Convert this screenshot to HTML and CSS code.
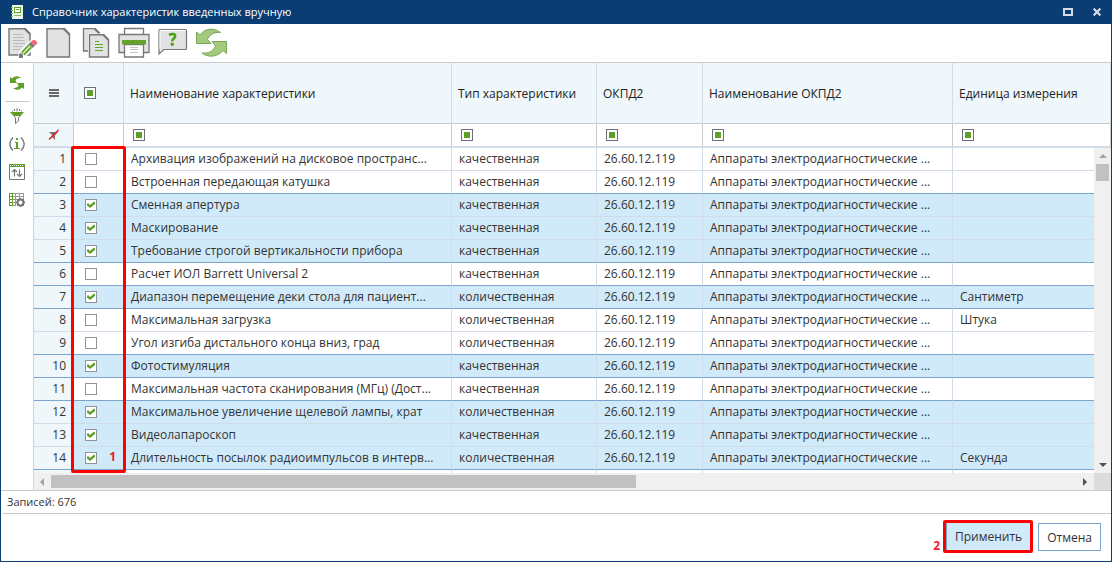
FILE: index.html
```html
<!DOCTYPE html>
<html lang="ru">
<head>
<meta charset="utf-8">
<title>Справочник характеристик введенных вручную</title>
<link rel="stylesheet" href="styles.css">
</head>
<body>
<main class="window">
  <header class="titlebar">
    <svg class="title-icon" width="12" height="14" viewBox="0 0 12 14"><path fill="#edf4e8" d="M1 0h11v14H1z"/><path fill="#5f9f28" d="M3 2h7v6H3z"/><path fill="#fff" d="M4 3h5v4H4z"/><path fill="#5f9f28" d="M5 4h3v1H5z"/><path fill="#8bb764" d="M3 10h7v1H3zM0 2h2v1H0zM0 5h2v1H0zM0 8h2v1H0zM0 11h2v1H0z"/></svg>
    <h1 class="title">Справочник характеристик введенных вручную</h1>
    <button class="win-btn" aria-label="Развернуть"><svg width="10" height="8" viewBox="0 0 10 8"><path fill="none" stroke="#d5dde6" stroke-width="2" d="M1 1h8v6H1z"/></svg></button>
    <button class="win-btn" aria-label="Закрыть"><svg width="8" height="8" viewBox="0 0 8 8"><path stroke="#d5dde6" stroke-width="2.2" d="M.6.6l6.8 6.8M7.4.6L.6 7.4"/></svg></button>
  </header>

  <nav class="toolbar" aria-label="Панель инструментов">
    <button class="tool" aria-label="Изменить"><svg width="30" height="32" viewBox="0 0 30 32"><path fill="#e2e2e2" stroke="#75777a" stroke-width="1.4" d="M1 1.7h16l5 5V28H1z"/><path fill="#fff" d="M17.700 0H24v6.500z"/><path stroke="#75777a" stroke-width="2" d="M16.500 1.500l5.500 5.500"/><path stroke="#b9bbbd" d="M5 7.500h10M5 10.500h11M5 13.500h12M5 16.500h12M5 19.500h9M5 22.500h7"/><path fill="#fff" stroke="#fff" stroke-width="2" d="M11 30l1-5L24 13l5 4-12 12z"/><path fill="#f16a7b" d="M22.500 15l2.500-2h2l2 2v2l-2.500 2z"/><path fill="#777" d="M20.500 17l2-2 4 4-2 2z"/><path fill="#65a52c" d="M13 25l7.500-8 3.500 4-7.500 7.500z"/><path stroke="#e2f0d7" stroke-width="1.300" d="M15 26.500l7-7.500"/><path fill="#777" d="M11 31v-4l2-1 2 2v2l-1 1z"/></svg></button>
    <button class="tool" aria-label="Создать"><svg width="28" height="32" viewBox="0 0 28 32"><path fill="#e2e2e2" stroke="#75777a" stroke-width="1.4" d="M1 1.700h17.500l5 5V30H1z"/><path fill="#fff" d="M18.500 0H25v7z"/><path stroke="#75777a" stroke-width="2" d="M17.500 1.500l6 6"/></svg></button>
    <button class="tool" aria-label="Копировать"><svg width="28" height="32" viewBox="0 0 28 32"><path fill="#e2e2e2" stroke="#75777a" stroke-width="1.300" d="M1.500 1.700h11.500l4.500 4.500V24h-16z"/><path fill="#fff" d="M13.500 0H19v6z"/><path stroke="#75777a" stroke-width="2" d="M12.500 1.500l5 5"/><path fill="#e2e2e2" stroke="#fff" stroke-width="3" d="M7.500 8h14l5 5v17h-19z"/><path fill="#e2e2e2" stroke="#75777a" stroke-width="1.400" d="M7.500 7.700h14l5 5V30h-19z"/><path fill="#fff" d="M22 6h6v6z"/><path stroke="#75777a" stroke-width="2" d="M21 7.500l5.500 5.500"/><path stroke="#63a32a" d="M13 14.500h4M13 17.500h8M13 20.500h8M13 23.500h8"/></svg></button>
    <button class="tool" aria-label="Печать"><svg width="32" height="32" viewBox="0 0 32 32"><path fill="#fff" stroke="#75777a" stroke-width="1.300" d="M6.500 9V1.500h19V8"/><path fill="#e2e2e2" stroke="#75777a" stroke-width="1.300" d="M1 7.500h30v18H1z"/><path fill="#fff" stroke="#75777a" stroke-width="1.300" d="M6.500 17.500h19V30h-19z"/><path fill="#63a32a" d="M4 13h24v4.500H4z"/><path stroke="#c4c4c4" d="M12 20.500h8M12 22.500h8M12 25.500h8"/></svg></button>
    <button class="tool" aria-label="Справка"><svg width="30" height="32" viewBox="0 0 30 32"><path fill="#e2e2e2" stroke="#75777a" stroke-width="1.200" d="M2.500 2.500h25q1 0 1 1v18q0 1-1 1H6L1 27V3.500q0-1 1.500-1z"/><path fill="none" stroke="#fff" d="M2 22V3.500h25.500"/><path fill="none" stroke="#49a30e" stroke-width="2.600" d="M11 8q6-2.500 6.200 1.200c0 2.500-3 2.200-3 5"/><path fill="#49a30e" d="M12.700 15.700h3v3h-3z"/></svg></button>
    <button class="tool" aria-label="Обновить"><svg width="32" height="32" viewBox="0 0 32 32"><path fill="#a5c97c" stroke="#7aa658" d="M.5 5L4 8C9 1 18 .500 24.500 5.500 18 5 14 7 11.500 12.500l3.500 4H.5z"/><path fill="#a5c97c" stroke="#7aa658" d="M30.500 26.500L27 23.500C22 30 12 31 6 26 12.500 26.500 17 24.500 19.500 19L16 14.500h14.500z"/></svg></button>
  </nav>

  <div class="workspace">
    <nav class="sidebar" aria-label="Действия со списком">
      <button class="side-btn side-first" aria-label="Обновить список"><svg width="16" height="16" viewBox="0 0 16 16"><path fill="#5f9f28" d="M1 2l2 1.500C6 .5 9 .5 12 3 9 3 7.500 3.500 6.500 5.500L8 8H1zM15 14l-2-1.500c-3 3-6 3-9 .5 3 0 4.500-.5 5.500-2.500L8 8h7z"/></svg></button>
      <button class="side-btn" aria-label="Фильтр"><svg width="16" height="16" viewBox="0 0 16 16"><path fill="#5f9f28" d="M1 4h14l-3.500 4h-7z"/><path fill="none" stroke="#777" d="M5 8l1.500 2v5.500L9.500 13v-3L11 8M3.500 3.500v-1M5.500 3V1M8 3.500V0M10.500 3V1M12.500 3.500v-1"/></svg></button>
      <button class="side-btn" aria-label="Информация"><svg width="16" height="16" viewBox="0 0 16 16"><path fill="none" stroke="#777" stroke-width="1.400" d="M4 1.500q-6.500 6.500 0 13M12 1.500q6.500 6.500 0 13"/><path fill="#5f9f28" d="M7 2h2v2H7zM6 6h3v6h2v1H5v-1h2V7H6z"/></svg></button>
      <button class="side-btn" aria-label="Сортировка"><svg width="16" height="16" viewBox="0 0 16 16"><path fill="#fff" stroke="#777" d="M.5.500h15v15H.5z"/><path fill="#5f9f28" d="M0 0h16v3H0z"/><path stroke="#fff" stroke-dasharray="1 1" d="M1 1.500h14"/><path stroke="#777" fill="none" stroke-width="1.200" d="M5.500 12.500v-7M3 8l2.500-2.500L8 8M10.500 5.500v7M8 10l2.500 2.500L13 10"/></svg></button>
      <button class="side-btn" aria-label="Настройка колонок"><svg width="16" height="16" viewBox="0 0 16 16"><path stroke="#999" fill="none" d="M3 1.500h12M3 4.500h12M3 7.500h12M3 10.500h4M3 13.500h4M14.500 1v6M6.500 1v12M10.500 1v6"/><path stroke="#5f9f28" fill="none" d="M.5 1v13M3.500 1v13M0 1.500h4M0 4.500h4M0 7.500h4M0 10.500h4M0 13.500h4"/><circle cx="11.500" cy="10.500" r="3" fill="#fff" stroke="#75777a" stroke-width="2"/><path stroke="#75777a" stroke-width="1.500" d="M11.500 6v2M11.500 13v2M7 10.500h2M14 10.500h2M8.300 7.300l1.300 1.300M13.400 12.400l1.300 1.300M8.300 13.700l1.300-1.300M13.400 8.600l1.300-1.300"/></svg></button>
    </nav>

    <section class="grid" aria-label="Характеристики">
      <table class="table table-head">
        <colgroup><col class="c-num"><col class="c-check"><col class="c-name"><col class="c-type"><col class="c-code"><col class="c-okpd"><col></colgroup>
        <thead>
          <tr class="head-row">
            <th class="center"><button class="icon-btn" aria-label="Меню"><svg width="10" height="8" viewBox="0 0 10 8"><path fill="#66686b" d="M0 0h10v2H0zM0 3h10v2H0zM0 6h10v2H0z"/></svg></button></th>
            <th class="select-all"><input class="mark" type="checkbox" aria-label="Выбрать все"></th>
            <th>Наименование характеристики</th><th>Тип характеристики</th><th>ОКПД2</th><th>Наименование ОКПД2</th><th>Единица измерения</th>
          </tr>
          <tr class="filter-row">
            <td class="center num"><button class="icon-btn" aria-label="Сбросить фильтр"><svg width="12" height="12" viewBox="0 0 12 12"><path fill="#75777a" d="M1 3h9L7 6.500V11L4 8V6z"/><path stroke="#f01818" stroke-width="1.400" d="M1 10.500L10.500 1"/></svg></button></td>
            <td></td>
            <td><button class="mark" aria-label="Фильтр: наименование"></button></td>
            <td><button class="mark" aria-label="Фильтр: тип"></button></td>
            <td><button class="mark" aria-label="Фильтр: ОКПД2"></button></td>
            <td><button class="mark" aria-label="Фильтр: наименование ОКПД2"></button></td>
            <td><button class="mark" aria-label="Фильтр: единица измерения"></button></td>
          </tr>
        </thead>
      </table>

      <div class="body-area">
        <div class="viewport">
          <table class="table table-body">
            <colgroup><col class="c-num"><col class="c-check"><col class="c-name"><col class="c-type"><col class="c-code"><col class="c-okpd"><col></colgroup>
            <tbody>
              <tr><td class="num">1</td><td class="pick"><input class="check" type="checkbox" aria-label="Строка 1"></td><td>Архивация изображений на дисковое пространс...</td><td>качественная</td><td>26.60.12.119</td><td>Аппараты электродиагностические ...</td><td></td></tr>
              <tr class="edge"><td class="num">2</td><td class="pick"><input class="check" type="checkbox" aria-label="Строка 2"></td><td>Встроенная передающая катушка</td><td>качественная</td><td>26.60.12.119</td><td>Аппараты электродиагностические ...</td><td></td></tr>
              <tr class="selected"><td class="num">3</td><td class="pick"><input class="check" type="checkbox" checked aria-label="Строка 3"></td><td>Сменная апертура</td><td>качественная</td><td>26.60.12.119</td><td>Аппараты электродиагностические ...</td><td></td></tr>
              <tr class="selected"><td class="num">4</td><td class="pick"><input class="check" type="checkbox" checked aria-label="Строка 4"></td><td>Маскирование</td><td>качественная</td><td>26.60.12.119</td><td>Аппараты электродиагностические ...</td><td></td></tr>
              <tr class="selected edge"><td class="num">5</td><td class="pick"><input class="check" type="checkbox" checked aria-label="Строка 5"></td><td>Требование строгой вертикальности прибора</td><td>качественная</td><td>26.60.12.119</td><td>Аппараты электродиагностические ...</td><td></td></tr>
              <tr class="edge"><td class="num">6</td><td class="pick"><input class="check" type="checkbox" aria-label="Строка 6"></td><td>Расчет ИОЛ Barrett Universal 2</td><td>качественная</td><td>26.60.12.119</td><td>Аппараты электродиагностические ...</td><td></td></tr>
              <tr class="selected edge"><td class="num">7</td><td class="pick"><input class="check" type="checkbox" checked aria-label="Строка 7"></td><td>Диапазон перемещение деки стола для пациент...</td><td>количественная</td><td>26.60.12.119</td><td>Аппараты электродиагностические ...</td><td>Сантиметр</td></tr>
              <tr><td class="num">8</td><td class="pick"><input class="check" type="checkbox" aria-label="Строка 8"></td><td>Максимальная загрузка</td><td>количественная</td><td>26.60.12.119</td><td>Аппараты электродиагностические ...</td><td>Штука</td></tr>
              <tr class="edge"><td class="num">9</td><td class="pick"><input class="check" type="checkbox" aria-label="Строка 9"></td><td>Угол изгиба дистального конца вниз, град</td><td>количественная</td><td>26.60.12.119</td><td>Аппараты электродиагностические ...</td><td></td></tr>
              <tr class="selected edge"><td class="num">10</td><td class="pick"><input class="check" type="checkbox" checked aria-label="Строка 10"></td><td>Фотостимуляция</td><td>качественная</td><td>26.60.12.119</td><td>Аппараты электродиагностические ...</td><td></td></tr>
              <tr class="edge"><td class="num">11</td><td class="pick"><input class="check" type="checkbox" aria-label="Строка 11"></td><td>Максимальная частота сканирования (МГц) (Дост...</td><td>качественная</td><td>26.60.12.119</td><td>Аппараты электродиагностические ...</td><td></td></tr>
              <tr class="selected"><td class="num">12</td><td class="pick"><input class="check" type="checkbox" checked aria-label="Строка 12"></td><td>Максимальное увеличение щелевой лампы, крат</td><td>количественная</td><td>26.60.12.119</td><td>Аппараты электродиагностические ...</td><td></td></tr>
              <tr class="selected"><td class="num">13</td><td class="pick"><input class="check" type="checkbox" checked aria-label="Строка 13"></td><td>Видеолапароскоп</td><td>качественная</td><td>26.60.12.119</td><td>Аппараты электродиагностические ...</td><td></td></tr>
              <tr class="selected edge"><td class="num">14</td><td class="pick"><input class="check" type="checkbox" checked aria-label="Строка 14"></td><td>Длительность посылок радиоимпульсов в интерв...</td><td>количественная</td><td>26.60.12.119</td><td>Аппараты электродиагностические ...</td><td>Секунда</td></tr>
              <tr aria-hidden="true"><td class="num"></td><td></td><td></td><td></td><td></td><td></td><td></td></tr>
            </tbody>
          </table>
        </div>
        <div class="vscroll"><span class="arrow up"></span><span class="vthumb"></span><span class="arrow down"></span></div>
        <div class="callout"><span class="callout-num">1</span></div>
      </div>
      <div class="hscroll"><span class="arrow left"></span><div class="htrack"><div class="hthumb"></div></div><span class="arrow right"></span><span class="corner"></span></div>
    </section>
  </div>

  <div class="status">Записей: 676</div>
  <footer class="footer">
    <span class="step">2</span>
    <div class="marked"><button class="btn btn-primary">Применить</button></div>
    <button class="btn">Отмена</button>
  </footer>
</main>
</body>
</html>
```
FILE: styles.css
```css
* { box-sizing: border-box; }
body { margin: 0; font-family: "Open Sans", "Noto Sans", sans-serif; font-size: 12px; color: #333; }
button { font: inherit; color: inherit; padding: 0; border: 0; background: none; }
svg { display: block; }

.window { display: flex; flex-direction: column; height: 100vh; border: 1px solid #0a3d73; border-top: 0; background: #fff; }

.titlebar { display: flex; align-items: center; flex: 0 0 24px; padding: 0 10px; gap: 20px; background: #0a3d73; color: #fff; }
.title { flex: 1; margin: 0 0 0 -11px; font-size: 11px; font-weight: 500; line-height: 24px; }

.toolbar { display: flex; flex: 0 0 38px; align-items: flex-start; gap: 8px; padding: 3px 7px; }

.workspace { display: flex; flex: 1; min-height: 0; border-top: 1px solid #c8cacc; border-bottom: 1px solid #c8cacc; }
.sidebar { display: flex; flex-direction: column; align-items: center; flex: 0 0 33px; gap: 12px; padding-top: 12px; border-right: 1px solid #d0d4d8; }
.side-first { padding: 0 4px 10px; border-bottom: 1px solid #c8cacc; margin-bottom: -6px; }

.grid { display: flex; flex-direction: column; flex: 1; min-width: 0; }
.table { width: 100%; table-layout: fixed; border-collapse: separate; border-spacing: 0; }
.c-num { width: 40px; }
.c-check { width: 50px; }
.c-name { width: 328px; }
.c-type { width: 145px; }
.c-code { width: 106px; }
.c-okpd { width: 250px; }
.table th, .table td { padding: 0 7px; border-right: 1px solid #d0dce8; border-bottom: 1px solid #d0dce8; text-align: left; font-weight: 400; white-space: nowrap; overflow: hidden; text-overflow: ellipsis; }
.table .num { background: #eff7fb; text-align: right; }
.table .center { text-align: center; padding: 0; }
.center .icon-btn { display: block; margin: 0 auto; }
.center svg { margin: 0 auto; }

.table-head th { height: 61px; padding: 0 6px; background: #eff7fb; border-bottom-color: #c8cacc; color: #222; }
.table-head .select-all { padding-left: 10px; }
.table-head td { height: 24px; padding-left: 9px; border-right-color: #c8cacc; border-bottom-width: 2px; line-height: 12px; }
.mark { appearance: none; display: block; width: 12px; height: 12px; margin: 0; border: 1px solid #6d7175; background: #5f9f28; box-shadow: inset 0 0 0 2px #fff; }

.body-area { position: relative; display: flex; flex: 1; min-height: 0; }
.viewport { flex: 1; min-width: 0; overflow: hidden; }
.table-body td { height: 23px; line-height: 22px; }
.table-body td:last-child { border-right: 0; }
.table-body .pick { padding-left: 11px; }
.table-body .selected td { background: #d1eaf9; }
.table-body .selected .num { background: #eff7fb; }
.table-body .edge td { border-bottom-color: #7ba5cf; }
.check { appearance: none; display: block; width: 12px; height: 12px; margin: 0; border: 1px solid #919396; background: #fff; }
.check:checked::before { content: ""; display: block; width: 8px; height: 8px; margin: 1px; background: #5f9f28; clip-path: polygon(0 38%, 13% 25%, 38% 50%, 88% 6%, 100% 18%, 100% 38%, 38% 88%, 0 56%); }

.vscroll { display: flex; flex-direction: column; align-items: center; flex: 0 0 17px; padding: 6px 0; background: #f0f0f0; }
.vthumb { width: 13px; height: 17px; margin-top: 6px; background: #c1c1c1; }
.arrow { flex: none; border: 4px solid transparent; }
.up { border-top: 0; border-bottom-color: #a3a3a3; }
.down { border-bottom: 0; border-top-color: #505050; margin-top: auto; }
.left { border-left: 0; border-right-color: #a3a3a3; }
.right { border-right: 0; border-left-color: #505050; }
.hscroll { display: flex; align-items: center; flex: 0 0 17px; padding-left: 6px; background: #f0f0f0; }
.htrack { flex: 1; margin: 0 6px 0 7px; }
.hthumb { width: 57%; height: 13px; background: #c1c1c1; }
.corner { align-self: stretch; width: 17px; margin-left: 7px; background: #dcdcdc; }

.callout { position: absolute; left: 37px; top: -2px; bottom: 0; width: 55px; border: 3px solid #f00; border-radius: 2px; pointer-events: none; }
.callout-num { position: absolute; right: 7px; bottom: 4px; line-height: 18px; }
.callout-num, .step { color: #ed1c24; font-weight: 700; }

.status { flex: 0 0 23px; margin-left: 1px; padding-left: 5px; border-bottom: 1px solid #c8cacc; font-size: 11px; line-height: 22px; }
.footer { display: flex; align-items: flex-start; justify-content: flex-end; flex: 0 0 47px; padding: 6px 10px; }
.step { align-self: flex-end; margin-right: 3px; line-height: 18px; }
.marked { margin-right: 5px; border: 3px solid #f00; border-radius: 2px; }
.btn { height: 28px; margin-top: 3px; padding: 0 8px; border: 1px solid #7ba5cf; background: #fff; }
.btn-primary { display: block; height: 27px; margin: 0; border-width: 0 0 0 1px; background: #d1eaf9; }
```
